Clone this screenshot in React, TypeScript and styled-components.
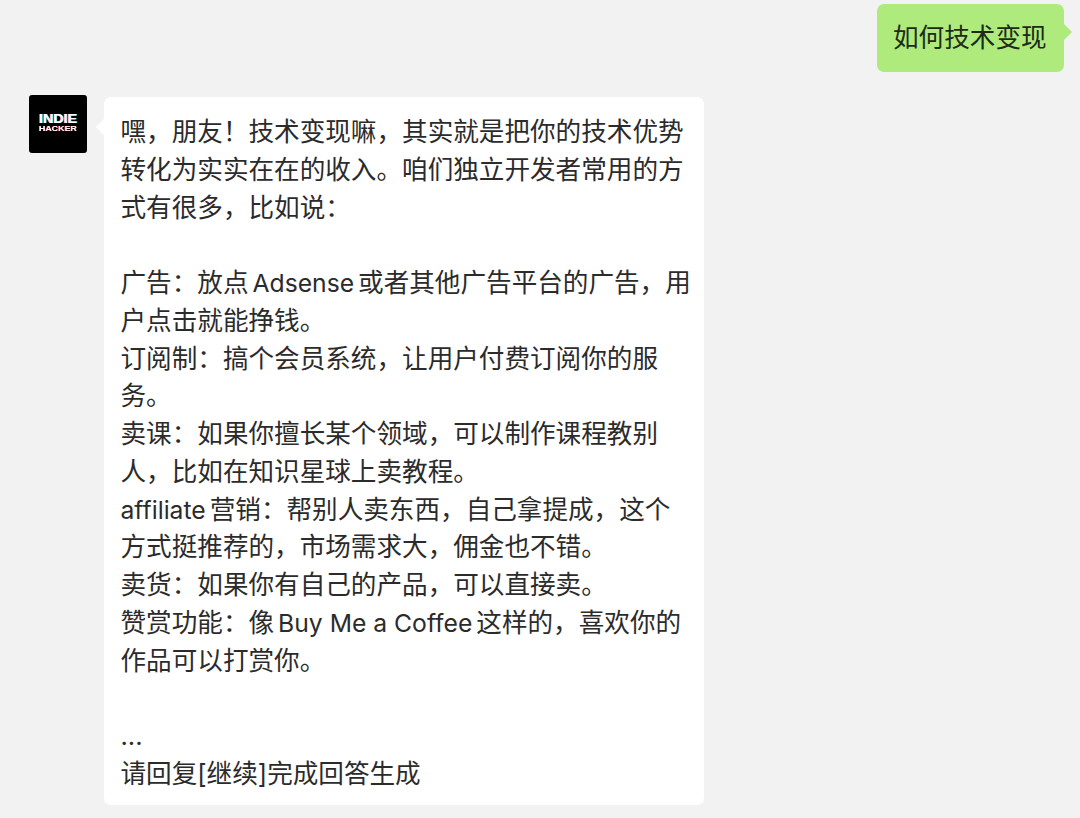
import React from "react";
import styled, { createGlobalStyle } from "styled-components";

const replyLines = [
  "嘿，朋友！技术变现嘛，其实就是把你的技术优势",
  "转化为实实在在的收入。咱们独立开发者常用的方",
  "式有很多，比如说：",
  "",
  "广告：放点Adsense或者其他广告平台的广告，用",
  "户点击就能挣钱。",
  "订阅制：搞个会员系统，让用户付费订阅你的服",
  "务。",
  "卖课：如果你擅长某个领域，可以制作课程教别",
  "人，比如在知识星球上卖教程。",
  "affiliate营销：帮别人卖东西，自己拿提成，这个",
  "方式挺推荐的，市场需求大，佣金也不错。",
  "卖货：如果你有自己的产品，可以直接卖。",
  "赞赏功能：像Buy Me a Coffee这样的，喜欢你的",
  "作品可以打赏你。",
  "",
  "...",
  "请回复[继续]完成回答生成",
];

// latin words inside a chinese line get their own span
const renderLine = (line: string) =>
  line
    .split(/([A-Za-z][A-Za-z ]*)/)
    .filter(Boolean)
    .map((part, i) =>
      /^[A-Za-z]/.test(part) ? <Latin key={i}>{part}</Latin> : <span key={i}>{part}</span>
    );

const Logo = () => (
  <LogoSvg width="58" height="58" viewBox="0 0 58 58">
    <g fontFamily="'Liberation Sans', sans-serif" fontWeight="700">
      <text x="9.3" y="28" fontSize="12" fill="#ff4d6a" textLength="38" lengthAdjust="spacingAndGlyphs">INDIE</text>
      <text x="10.7" y="28" fontSize="12" fill="#5fe8e8" textLength="38" lengthAdjust="spacingAndGlyphs">INDIE</text>
      <text x="10" y="28" fontSize="12" fill="#ffffff" textLength="38" lengthAdjust="spacingAndGlyphs">INDIE</text>
      <text x="9.4" y="36" fontSize="8" fill="#ff4d6a" textLength="38" lengthAdjust="spacingAndGlyphs">HACKER</text>
      <text x="10" y="36" fontSize="8" fill="#ffffff" textLength="38" lengthAdjust="spacingAndGlyphs">HACKER</text>
    </g>
  </LogoSvg>
);

const App = () => {
  return (
    <>
      <GlobalStyle />
      <Page>
        <SentRow>
          <SentBubble>如何技术变现</SentBubble>
        </SentRow>
        <ReplyRow>
          <Avatar>
            <Logo />
          </Avatar>
          <ReplyBubble>
            {replyLines.map((line, i) => (
              <Line key={i}>{renderLine(line)}</Line>
            ))}
          </ReplyBubble>
        </ReplyRow>
      </Page>
    </>
  );
};

export default App;

const GlobalStyle = createGlobalStyle`
  html, body {
    margin: 0;
    padding: 0;
    background: #f2f2f2;
  }
`;

const Page = styled.div`
  width: 1080px;
  height: 818px;
  overflow: hidden;
  background: #f2f2f2;
  color: #2b2b2b;
  font-family: Inter, "Noto Sans CJK SC", sans-serif;
  font-size: 25.6px;
`;

const SentRow = styled.div`
  display: flex;
  justify-content: flex-end;
  padding: 4px 16px 0 0;
`;

const Bubble = styled.div`
  position: relative;
  border-radius: 7px;

  &::before {
    content: "";
    position: absolute;
    border-style: solid;
    border-color: transparent;
    border-width: 8px;
  }
`;

const SentBubble = styled(Bubble)`
  width: 187px;
  height: 68px;
  box-sizing: border-box;
  padding-left: 16px;
  line-height: 67px;
  background: #aeeb7c;
  color: #1f2a18;

  &::before {
    top: 20px;
    left: 100%;
    border-left-color: #aeeb7c;
  }
`;

const ReplyRow = styled.div`
  display: flex;
  align-items: flex-start;
  gap: 17px;
  margin-top: 23px;
  padding-left: 29px;
`;

const Avatar = styled.div`
  width: 58px;
  height: 58px;
  flex: none;
  border-radius: 3px;
  overflow: hidden;
  background: #000;
`;

const LogoSvg = styled.svg`
  display: block;
  filter: blur(0.4px);
`;

const ReplyBubble = styled(Bubble)`
  width: 600px;
  height: 708px;
  box-sizing: border-box;
  margin-top: 2px;
  padding: 16px 0 0 16.5px;
  background: #fff;

  &::before {
    top: 22px;
    right: 100%;
    border-right-color: #fff;
  }
`;

const Line = styled.div`
  height: 37.75px;
  line-height: 37.75px;
  white-space: nowrap;
`;

const Latin = styled.span`
  font-size: 24.7px;
  margin: 0 4px;

  &:first-child {
    margin-left: 0;
  }
`;
